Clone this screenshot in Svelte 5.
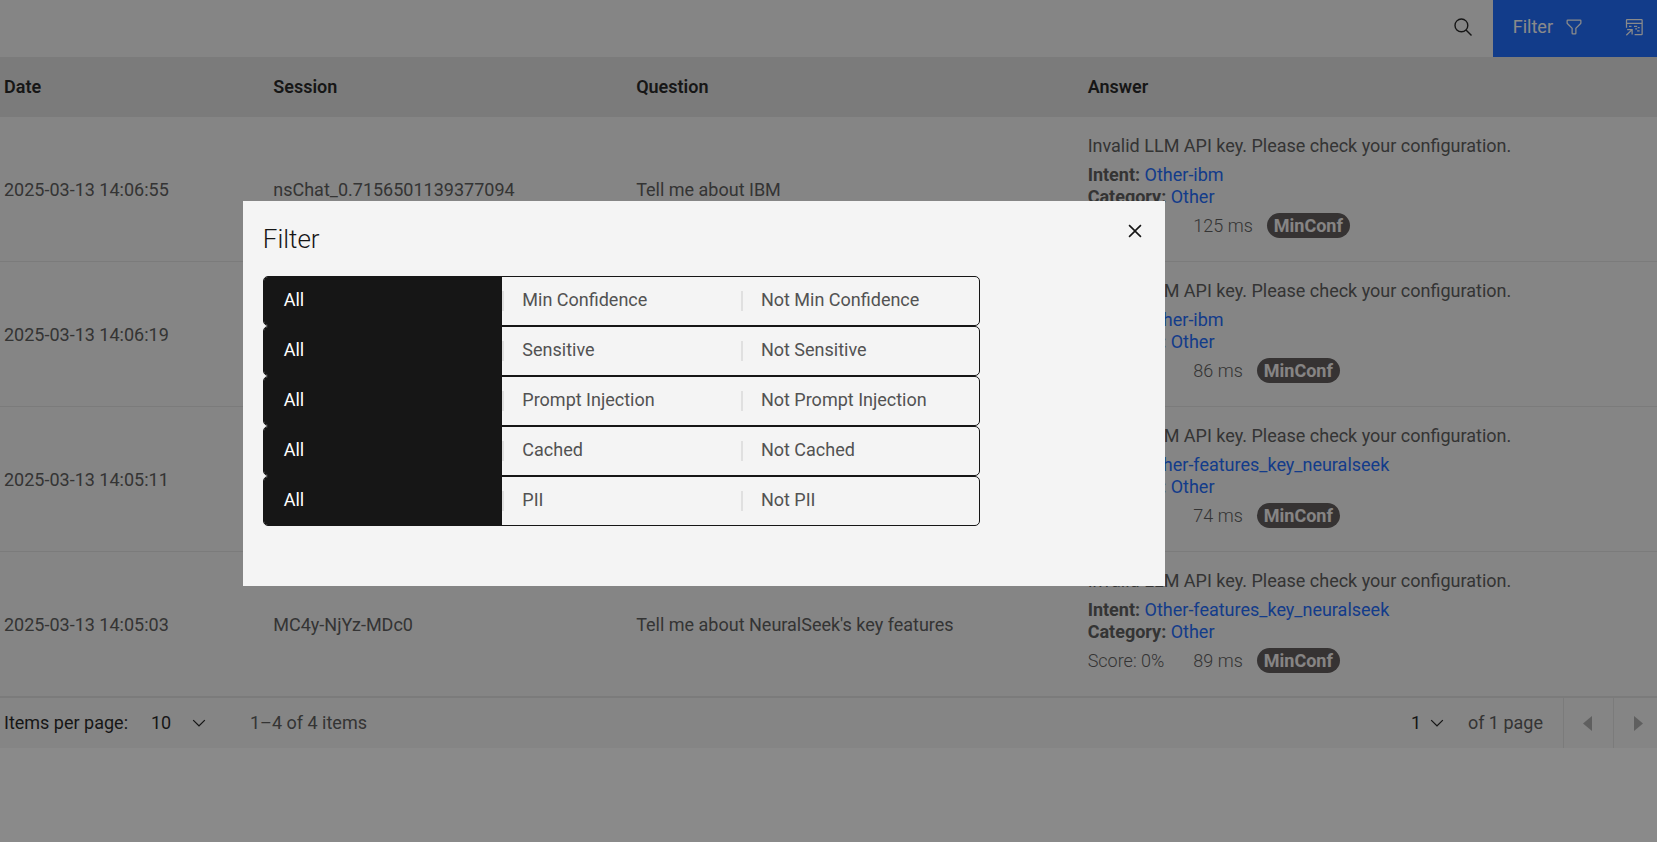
<script>
  const rows = [
    { date: '2025-03-13 14:06:55', session: 'nsChat_0.7156501139377094', question: 'Tell me about IBM', intent: 'Other-ibm', ms: 125 },
    { date: '2025-03-13 14:06:19', session: 'nsChat_0.7156501139377094', question: 'Tell me about IBM', intent: 'Other-ibm', ms: 86 },
    { date: '2025-03-13 14:05:11', session: 'MC4y-NjYz-MDc0', question: "Tell me about NeuralSeek's key features", intent: 'Other-features_key_neuralseek', ms: 74 },
    { date: '2025-03-13 14:05:03', session: 'MC4y-NjYz-MDc0', question: "Tell me about NeuralSeek's key features", intent: 'Other-features_key_neuralseek', ms: 89 }
  ];
  const filters = ['Min Confidence', 'Sensitive', 'Prompt Injection', 'Cached', 'PII'];
  let selected = $state(filters.map(() => 0));
  let open = $state(true);
</script>

<div class="page">
  <div class="toolbar">
    <button class="search" aria-label="Search">
      <svg width="20" height="20" viewBox="0 0 20 20"><g fill="none" stroke="currentColor" stroke-width="1.4"><circle cx="8.400" cy="8.400" r="6.400" /><path d="M13 13l5.500 5.500" /></g></svg>
    </button>
    <div class="actions">
      <button class="filter" onclick={() => (open = true)}>
        Filter
        <svg width="20" height="20" viewBox="0 0 32 32"><path fill="currentColor" d="M18 28h-4a2 2 0 0 1-2-2v-7.59L4.59 11A2 2 0 0 1 4 9.59V6a2 2 0 0 1 2-2h20a2 2 0 0 1 2 2v3.59a2 2 0 0 1-.59 1.41L20 18.41V26a2 2 0 0 1-2 2zM6 6v3.59l8 8V26h4v-8.41l8-8V6z" /></svg>
      </button>
      <button class="export" aria-label="Export table">
        <svg width="20" height="20" viewBox="0 0 32 32"><path fill="currentColor" d="M28 3H5a2 2 0 0 0-2 2v12h2V11h23v16H17v2h11a2 2 0 0 0 2-2V5a2 2 0 0 0-2-2zM5 9V5h23v4zM5 19v2h5.586L3 28.586 4.414 30 12 22.414V28h2v-9zM8 14h4v2H8zM16 14h5v2h-5zM18 18h3v2h-3zM22 16h3v2h-3zM21 21h4v2h-4z" /></svg>
      </button>
    </div>
  </div>

  <table>
    <colgroup><col class="c-date" /><col class="c-session" /><col class="c-question" /><col /></colgroup>
    <thead>
      <tr><th>Date</th><th>Session</th><th>Question</th><th>Answer</th></tr>
    </thead>
    <tbody>
      {#each rows as row}
        <tr>
          <td>{row.date}</td>
          <td>{row.session}</td>
          <td>{row.question}</td>
          <td class="answer">
            <p>Invalid LLM API key. Please check your configuration.</p>
            <div class="meta">
              <div><strong>Intent:</strong> <a href="#intent">{row.intent}</a></div>
              <div><strong>Category:</strong> <a href="#category">Other</a></div>
            </div>
            <div class="stats">
              <span class="score">Score: 0%</span>
              <span class="time">{row.ms} ms</span>
              <span class="badge">MinConf</span>
            </div>
          </td>
        </tr>
      {/each}
    </tbody>
  </table>

  <div class="pagination">
    <label for="size">Items per page:</label>
    <div class="pick size">
      <select id="size"><option>10</option></select>
      <svg width="20" height="20" viewBox="0 0 16 16"><path fill="currentColor" d="M8 11L3 6l.7-.7L8 9.6l4.3-4.3.7.7z" /></svg>
    </div>
    <span class="range">1–4 of 4 items</span>
    <div class="pick current">
      <select aria-label="Page"><option>1</option></select>
      <svg width="20" height="20" viewBox="0 0 16 16"><path fill="currentColor" d="M8 11L3 6l.7-.7L8 9.6l4.3-4.3.7.7z" /></svg>
    </div>
    <span class="total">of 1 page</span>
    <button class="nav" aria-label="Previous page" disabled>
      <svg width="20" height="20" viewBox="0 0 20 20"><path fill="currentColor" d="M13 3L4 10.500l9 7.500z" /></svg>
    </button>
    <button class="nav next" aria-label="Next page" disabled>
      <svg width="20" height="20" viewBox="0 0 20 20"><path fill="currentColor" d="M6 3l9 7.500L6 18z" /></svg>
    </button>
  </div>

  {#if open}
    <div class="overlay">
      <div class="modal" role="dialog" aria-modal="true" aria-labelledby="title">
        <header>
          <h2 id="title">Filter</h2>
          <button class="close" aria-label="Close" onclick={() => (open = false)}>
            <svg width="26" height="26" viewBox="0 0 32 32"><path fill="currentColor" d="M24 9.400L22.600 8 16 14.600 9.400 8 8 9.400l6.600 6.600L8 22.600 9.400 24l6.600-6.600 6.600 6.600 1.400-1.400-6.600-6.600L24 9.400z" /></svg>
          </button>
        </header>
        <div class="switchers">
          {#each filters as name, i}
            <div class="switcher" role="group" aria-label={name}>
              {#each ['All', name, 'Not ' + name] as option, j}
                <button class:on={selected[i] === j} aria-pressed={selected[i] === j} onclick={() => (selected[i] = j)}>{option}</button>
              {/each}
            </div>
          {/each}
        </div>
      </div>
    </div>
  {/if}
</div>

<style>
  :global(body) {
    margin: 0;
    background: #fff;
  }
  .page {
    font-family: Roboto, "Open Sans", sans-serif;
    font-size: 18px;
    line-height: 22px;
    color: #161616;
  }
  button,
  select {
    font: inherit;
    color: inherit;
    border: 0;
    margin: 0;
    padding: 0;
    background: none;
    border-radius: 0;
  }
  svg {
    display: block;
    flex: none;
  }
  .toolbar {
    display: flex;
    justify-content: flex-end;
    height: 57px;
    background: #f4f4f4;
  }
  .search {
    width: 60px;
    padding: 0 20px 3px;
  }
  .actions {
    display: flex;
    background: #0f62fe;
    color: #fff;
  }
  .filter {
    display: flex;
    align-items: center;
    gap: 11px;
    padding: 0 20px 3px;
  }
  .export {
    padding: 0 13px 3px 20px;
  }
  table {
    width: 100%;
    table-layout: fixed;
    border-collapse: separate;
    border-spacing: 0;
    background: #f4f4f4;
  }
  .c-date {
    width: 16.25%;
  }
  .c-session {
    width: 21.9%;
  }
  .c-question {
    width: 27.25%;
  }
  th {
    height: 60px;
    padding: 0 4px;
    text-align: left;
    font-weight: 600;
    background: #e0e0e0;
  }
  td {
    padding: 2px 4px 0;
    color: #525252;
    border-bottom: 1px solid #e0e0e0;
  }
  .answer {
    padding: 18px 4px 23px;
  }
  .answer p {
    margin: 0 0 7px;
  }
  a {
    color: #0f62fe;
    text-decoration: none;
  }
  .stats {
    display: flex;
    align-items: center;
    margin-top: 5px;
    font-weight: 300;
    color: #525252;
  }
  .time {
    margin: 0 14px 0 29px;
  }
  .badge {
    padding: 0 7px;
    line-height: 25px;
    border-radius: 13px;
    font-weight: 700;
    color: #f7f3f2;
    background: #565151;
  }
  .pagination {
    display: flex;
    align-items: center;
    height: 50px;
    padding-left: 4px;
    border-top: 1px solid #e0e0e0;
    background: #f4f4f4;
  }
  .pick {
    display: flex;
    align-items: center;
  }
  select {
    appearance: none;
    outline: 0;
  }
  .size {
    gap: 17px;
    margin-left: 23px;
  }
  .range {
    margin-left: 41px;
    color: #525252;
  }
  .current {
    margin-left: auto;
    gap: 5px;
  }
  .total {
    margin: 0 20px 0 21px;
    color: #525252;
  }
  .nav {
    display: flex;
    align-items: center;
    justify-content: center;
    align-self: stretch;
    width: 50px;
    box-sizing: border-box;
    border-left: 1px solid #e0e0e0;
    color: #a8a8a8;
  }
  .next {
    width: 44px;
    padding-left: 5px;
  }
  .overlay {
    position: fixed;
    inset: 0;
    padding: 201px 29.7% 0 14.65%;
    background: rgba(22, 22, 22, 0.5);
  }
  .modal {
    padding-bottom: 60px;
    background: #f4f4f4;
  }
  header {
    display: flex;
    justify-content: space-between;
    height: 75px;
  }
  h2 {
    margin: 0;
    padding: 22px 20px 0;
    font-size: 26px;
    line-height: 32px;
    font-weight: 300;
  }
  .close {
    display: flex;
    align-items: center;
    justify-content: center;
    width: 60px;
    height: 60px;
  }
  .switchers {
    padding: 0 20% 0 20px;
  }
  .switcher {
    display: grid;
    grid-template-columns: repeat(3, 1fr);
    height: 50px;
    box-sizing: border-box;
    border: 1px solid #161616;
    border-radius: 5px;
    overflow: hidden;
  }
  .switcher button {
    padding: 0 20px 2px;
    text-align: left;
    color: #525252;
  }
  .switcher button + button {
    background: linear-gradient(#e0e0e0, #e0e0e0) left center / 2px 20px no-repeat;
  }
  .switcher button.on {
    background: #161616;
    color: #fff;
  }
</style>
